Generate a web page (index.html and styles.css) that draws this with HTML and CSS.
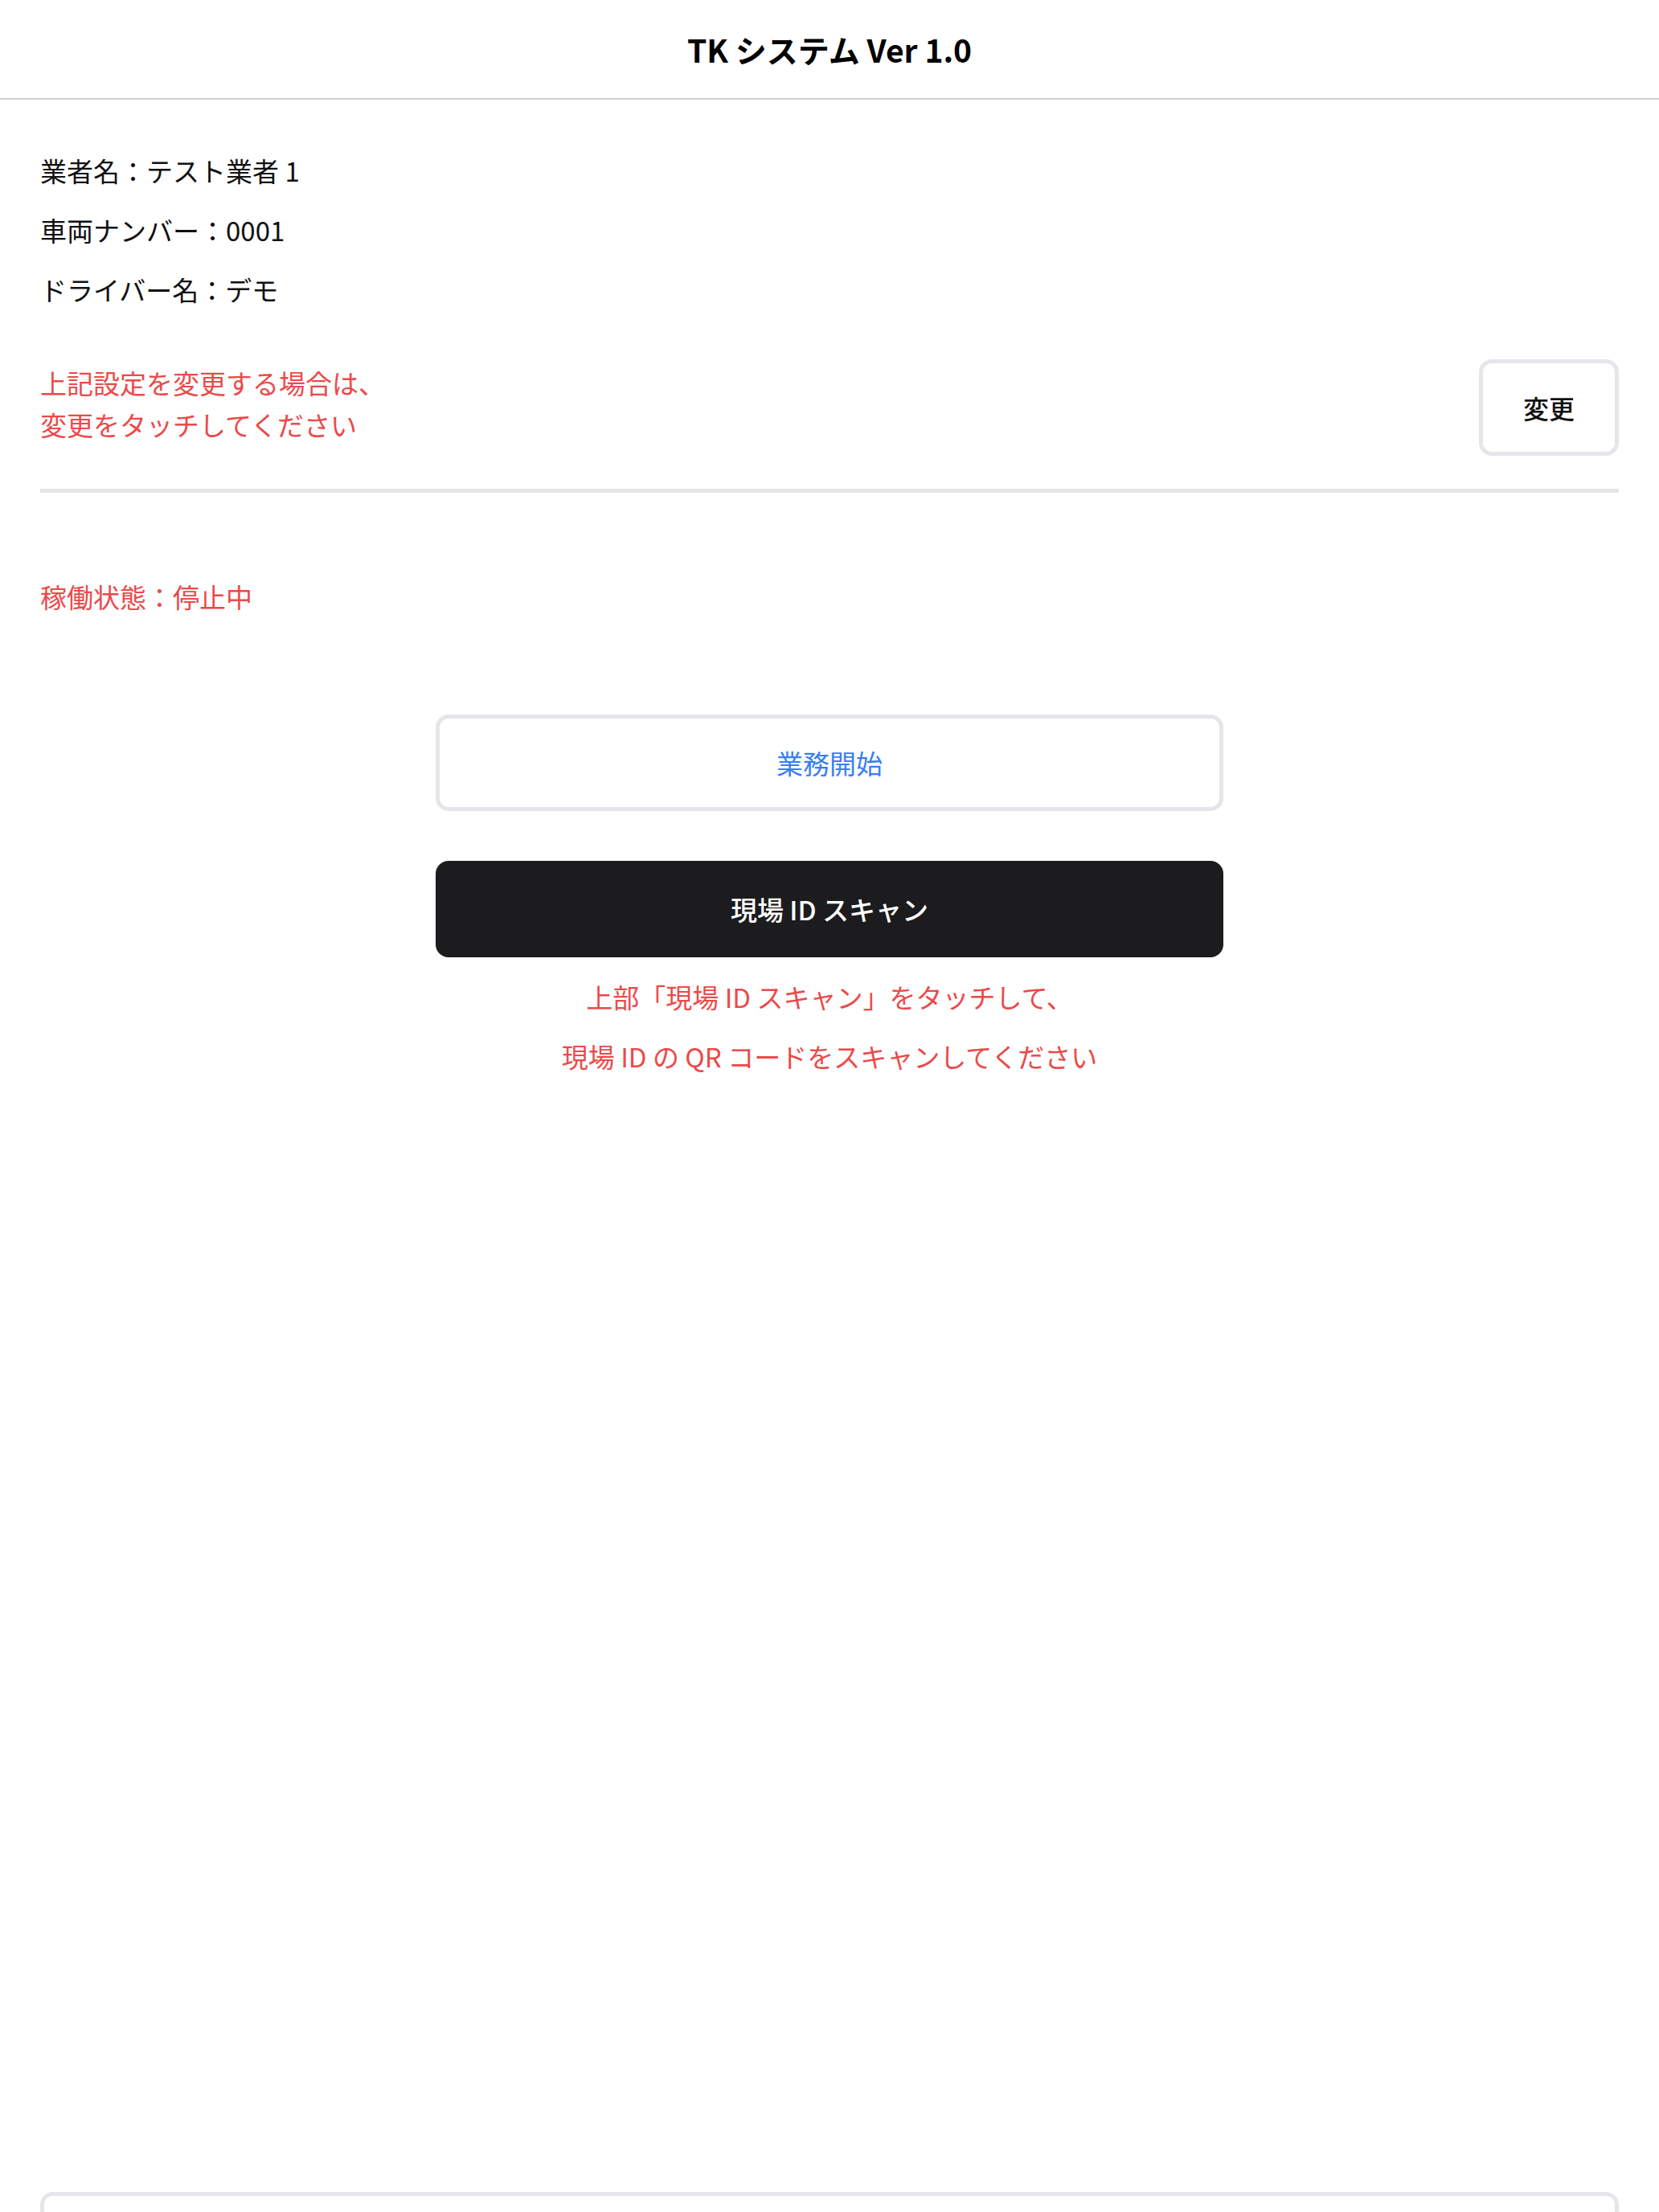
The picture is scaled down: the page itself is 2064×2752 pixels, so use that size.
FILE: index.html
```html
<!DOCTYPE html>
<html lang="ja">
<head>
  <meta charset="UTF-8" />
  <meta name="viewport" content="width=device-width, initial-scale=1.0"/>
  <title>TKシステム</title>
  <link rel="stylesheet" href="styles.css">
</head>
<body>

  <div class="top-bar">TK システム Ver 1.0</div>

  <div class="content">
    <div class="info">
      <div class="info-line">業者名：テスト業者 1</div>
      <div class="info-line">車両ナンバー：0001</div>
      <div class="info-line">ドライバー名：デモ</div>
    </div>

    <div class="change-row">
      <div class="notice">上記設定を変更する場合は、<br>変更をタッチしてください</div>
      <button class="change-btn">変更</button>
    </div>

    <div class="divider"></div>

    <div class="status">稼働状態：停止中</div>

    <div class="actions">
      <button class="start-btn">業務開始</button>
      <button class="scan-btn">現場 ID スキャン</button>
      <div class="hint">
        <div>上部「現場 ID スキャン」をタッチして、</div>
        <div>現場 ID の QR コードをスキャンしてください</div>
      </div>
    </div>

    <!-- list panel, starts below the fold -->
    <div class="bottom-panel"></div>
  </div>

</body>
</html>
```

FILE: styles.css
```css
body {
  font-family: "Noto Sans CJK JP", "Noto Sans", sans-serif;
  background: #fff;
  color: #111;
  margin: 0;
}

button {
  font-family: inherit;
  cursor: pointer;
}

.top-bar {
  height: 122px;
  border-bottom: 2px solid #cfcfcf;
  display: flex;
  justify-content: center;
  align-items: center;
  font-size: 39px;
  font-weight: 700;
  color: #000;
}

.content {
  padding: 0 50px;
}

.info {
  margin-top: 51px;
}

.info-line {
  font-size: 33px;
  line-height: 74px;
}

.change-row {
  margin-top: 50px;
  display: flex;
  justify-content: space-between;
  align-items: center;
}

.notice {
  color: #eb4a4a;
  font-size: 33px;
  line-height: 52px;
  padding-bottom: 10px;
}

.change-btn {
  width: 174px;
  height: 120px;
  background: #fff;
  border: 5px solid #e5e5ea;
  border-radius: 16px;
  font-size: 32px;
  font-weight: 500;
  color: #111;
}

.divider {
  margin-top: 41px;
  height: 5px;
  background: #e5e5e5;
}

.status {
  margin-top: 103px;
  color: #eb4a4a;
  font-size: 33px;
  line-height: 52px;
}

.actions {
  display: flex;
  flex-direction: column;
  align-items: center;
  margin-top: 121px;
}

.start-btn,
.scan-btn {
  width: 980px;
  height: 120px;
  border-radius: 16px;
  font-size: 33px;
}

.start-btn {
  background: #fff;
  border: 5px solid #e5e5ea;
  color: #3a7ef2;
}

.scan-btn {
  margin-top: 62px;
  background: #1c1c1e;
  border: none;
  color: #fff;
  font-weight: 500;
}

.hint {
  margin-top: 12px;
  color: #eb4a4a;
  font-size: 33px;
  line-height: 74px;
  text-align: center;
}

.bottom-panel {
  margin-top: 1376px;
  height: 21px;
  border: 5px solid #e5e5ea;
  border-bottom: none;
  border-radius: 16px 16px 0 0;
}
```
